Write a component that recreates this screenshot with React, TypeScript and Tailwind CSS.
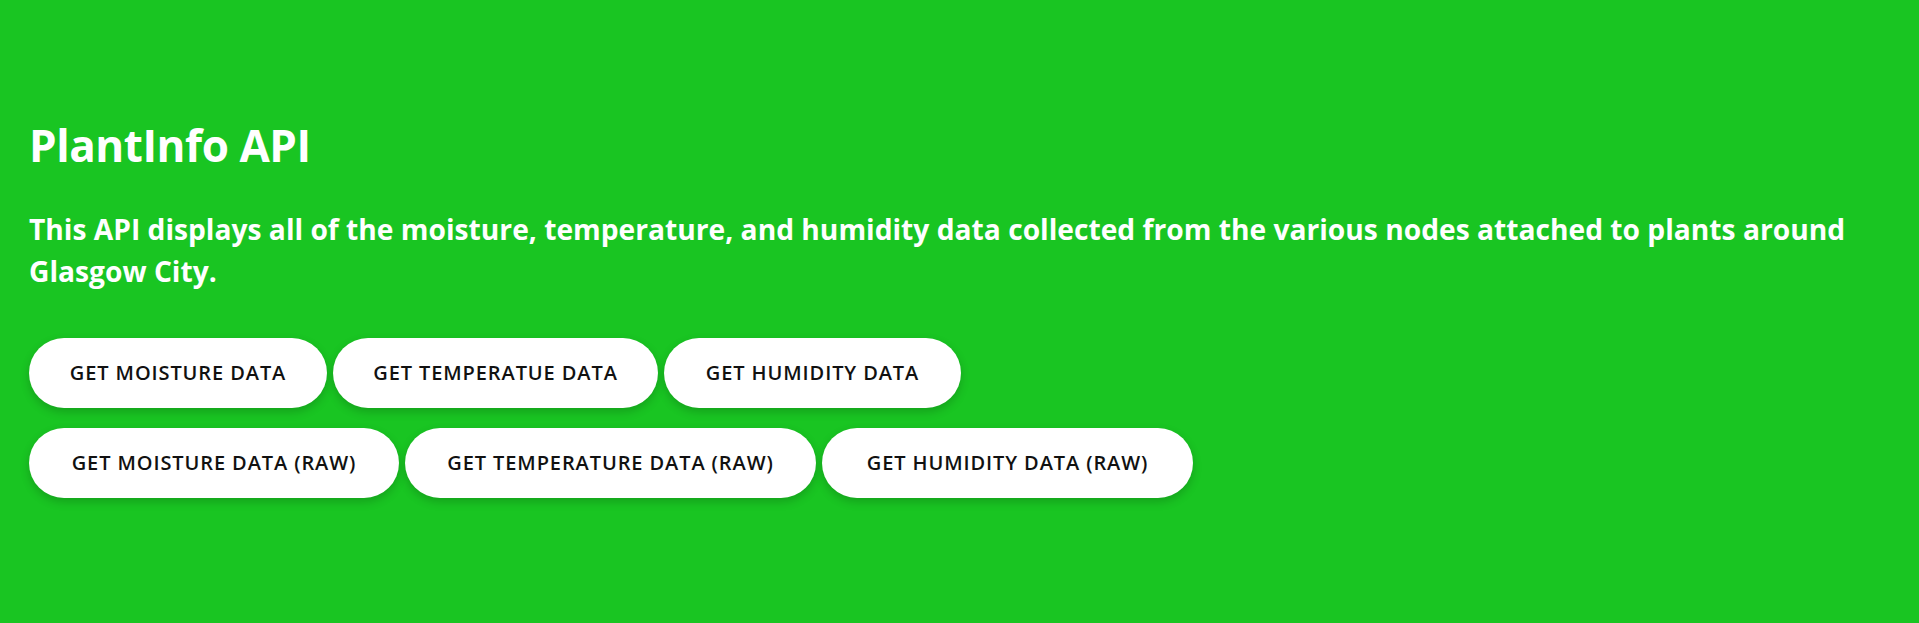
import React from "react";

const row1 = [
  { label: "GET MOISTURE DATA", w: "w-[298px]" },
  { label: "GET TEMPERATUE DATA", w: "w-[325px]" },
  { label: "GET HUMIDITY DATA", w: "w-[297px]" },
];
const row2 = [
  { label: "GET MOISTURE DATA (RAW)", w: "w-[370px]" },
  { label: "GET TEMPERATURE DATA (RAW)", w: "w-[411px]" },
  { label: "GET HUMIDITY DATA (RAW)", w: "w-[371px]" },
];

function Btn({ label, w }: { label: string; w: string }) {
  return (
    <button
      className={`${w} h-[70px] rounded-full bg-white text-[#111111] text-[20px] font-semibold tracking-[0.045em] flex items-center justify-center shadow-[0_4px_10px_rgba(0,0,0,0.18)]`}
    >
      {label}
    </button>
  );
}

export default function App() {
  return (
    <div
      className="min-h-[623px] w-full bg-[#19c522] px-[29px] pt-[117px] text-white"
      style={{ fontFamily: '"Open Sans", "Noto Sans", sans-serif' }}
    >
      <h1 className="text-[44px] font-bold leading-[56px] tracking-[-0.01em]">PlantInfo API</h1>
      <p className="mt-[35px] text-[28.2px] font-bold leading-[42px]">
        This API displays all of the moisture, temperature, and humidity data collected from the various nodes attached to plants around Glasgow City.
      </p>
      <div className="mt-[46px] flex flex-col gap-[20px]">
        <div className="flex gap-[6px]">
          {row1.map((b) => (
            <Btn key={b.label} {...b} />
          ))}
        </div>
        <div className="flex gap-[6px]">
          {row2.map((b) => (
            <Btn key={b.label} {...b} />
          ))}
        </div>
      </div>
    </div>
  );
}
